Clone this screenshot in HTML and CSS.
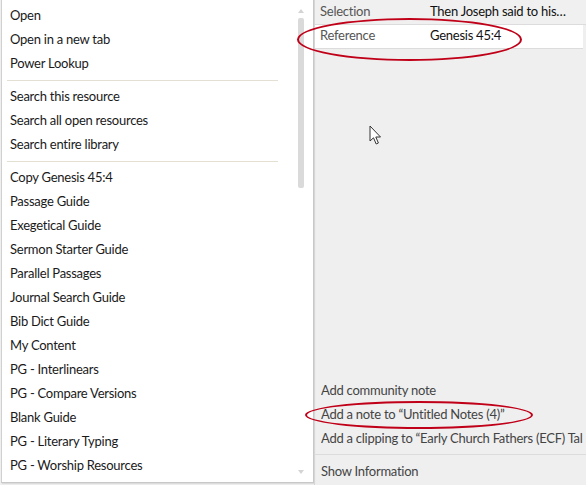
FILE: index.html
```html
<!DOCTYPE html>
<html>
<head>
<meta charset="utf-8">
<link rel="stylesheet" href="styles.css">
</head>
<body>
<div class="page">
  <div class="menu">
    <div class="menu-list">
      <div class="item">Open</div>
      <div class="item">Open in a new tab</div>
      <div class="item">Power Lookup</div>
      <div class="sep"></div>
      <div class="item">Search this resource</div>
      <div class="item">Search all open resources</div>
      <div class="item">Search entire library</div>
      <div class="sep"></div>
      <div class="item">Copy Genesis 45:4</div>
      <div class="item">Passage Guide</div>
      <div class="item">Exegetical Guide</div>
      <div class="item">Sermon Starter Guide</div>
      <div class="item">Parallel Passages</div>
      <div class="item">Journal Search Guide</div>
      <div class="item">Bib Dict Guide</div>
      <div class="item">My Content</div>
      <div class="item">PG - Interlinears</div>
      <div class="item">PG - Compare Versions</div>
      <div class="item">Blank Guide</div>
      <div class="item">PG - Literary Typing</div>
      <div class="item">PG - Worship Resources</div>
    </div>
    <div class="scrollbar">
      <div class="arrow up"></div>
      <div class="track"><div class="thumb"></div></div>
      <div class="arrow down"></div>
    </div>
  </div>
  <div class="panel">
    <div class="row sel"><span class="label">Selection</span><span class="value">Then Joseph said to his…</span></div>
    <div class="row ref"><span class="label">Reference</span><span class="value">Genesis 45:4</span></div>
    <div class="spacer"></div>
    <div class="actions">
      <div class="action">Add community note</div>
      <div class="action">Add a note to “Untitled Notes (4)”</div>
      <div class="action">Add a clipping to “Early Church Fathers (ECF) Tal</div>
      <div class="psep"></div>
      <div class="action">Show Information</div>
    </div>
  </div>
  <div class="ring ring1"></div>
  <div class="ring ring2"></div>
  <svg class="cursor" width="14" height="22" viewBox="0 0 14 22">
    <path d="M1 1 L1 16 L4.5 12.8 L7.2 19 L9.4 18 L6.8 12 L11.5 12 Z" fill="#fff" stroke="#333" stroke-width="1" stroke-linejoin="miter"/>
  </svg>
</div>
</body>
</html>
```
FILE: styles.css
```css
html, body {
  margin: 0;
  padding: 0;
  width: 586px;
  height: 485px;
  overflow: hidden;
}
body {
  font-family: Lato, "Open Sans", sans-serif;
  font-size: 13px;
  letter-spacing: -0.25px;
  color: #1a1a1a;
}
.page {
  position: relative;
  display: grid;
  grid-template-columns: 314px 1fr;
  height: 485px;
  background: #efefef;
}
.menu {
  display: flex;
  background: #fff;
  border-left: 1px solid #d0d0d0;
  border-right: 1px solid #c8c8c8;
  border-bottom: 1px solid #c8c8c8;
  height: 483px;
  box-shadow: 1px 1px 1px rgba(0,0,0,0.08);
  box-sizing: border-box;
  margin-left: 1px;
}
.menu-list {
  flex: 1;
  padding: 4px 0 0 4px;
}
.item {
  height: 24px;
  line-height: 23px;
  padding-left: 4px;
  white-space: nowrap;
}
.sep {
  height: 1px;
  background: #e3dfd3;
  margin: 4px 16px 4px 1px;
}
.scrollbar {
  width: 13px;
  margin-right: 6px;
  display: flex;
  flex-direction: column;
  align-items: center;
}
.arrow {
  width: 0;
  height: 0;
  border-left: 3px solid transparent;
  border-right: 3px solid transparent;
}
.arrow.up {
  margin-top: 9px;
  border-bottom: 4px solid #d4d4d4;
}
.arrow.down {
  margin-bottom: 8px;
  border-top: 4px solid #d4d4d4;
}
.track {
  flex: 1;
  width: 100%;
  display: flex;
  justify-content: center;
  padding-top: 5px;
}
.thumb {
  width: 6px;
  height: 170px;
  background: #dadada;
  border-radius: 2px;
}
.panel {
  display: flex;
  flex-direction: column;
  border-left: 1px solid #d6d6d6;
  color: #444;
}
.row {
  display: flex;
  height: 24px;
  line-height: 22px;
  border-bottom: 1px solid #dcdcdc;
  padding-left: 5px;
  white-space: nowrap;
}
.row.sel {
  background: #f0f0f0;
  line-height: 23px;
}
.row.ref {
  background: #fff;
  height: 23px;
  line-height: 21px;
  margin-right: 3px;
}
.label {
  width: 110px;
  color: #555;
}
.value {
  color: #111;
}
.spacer {
  flex: 1;
}
.actions {
  padding-left: 6px;
  padding-bottom: 2px;
}
.action {
  height: 24px;
  line-height: 24px;
  white-space: nowrap;
  overflow: hidden;
}
.psep {
  height: 1px;
  background: #dcdcdc;
  margin: 4px 0 4px -6px;
}
.ring {
  position: absolute;
  border: 2px solid #c00018;
  border-radius: 50%;
  box-sizing: border-box;
}
.ring1 {
  left: 297px;
  top: 18px;
  width: 225px;
  height: 43px;
}
.ring2 {
  left: 305px;
  top: 401px;
  width: 228px;
  height: 28px;
}
.cursor {
  position: absolute;
  left: 369px;
  top: 125px;
}
```
